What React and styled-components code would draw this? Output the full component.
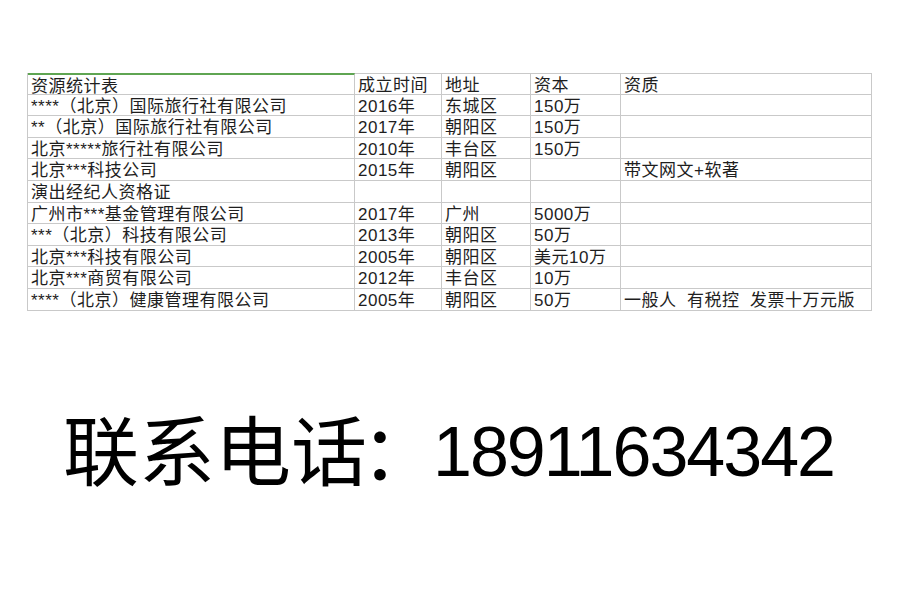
import React from 'react';
import styled, { createGlobalStyle } from 'styled-components';

const rows = [
  ['资源统计表', '成立时间', '地址', '资本', '资质'],
  ['****（北京）国际旅行社有限公司', '2016年', '东城区', '150万', ''],
  ['**（北京）国际旅行社有限公司', '2017年', '朝阳区', '150万', ''],
  ['北京*****旅行社有限公司', '2010年', '丰台区', '150万', ''],
  ['北京***科技公司', '2015年', '朝阳区', '', '带文网文+软著'],
  ['演出经纪人资格证', '', '', '', ''],
  ['广州市***基金管理有限公司', '2017年', '广州', '5000万', ''],
  ['***（北京）科技有限公司', '2013年', '朝阳区', '50万', ''],
  ['北京***科技有限公司', '2005年', '朝阳区', '美元10万', ''],
  ['北京***商贸有限公司', '2012年', '丰台区', '10万', ''],
  ['****（北京）健康管理有限公司', '2005年', '朝阳区', '50万', '一般人  有税控  发票十万元版'],
];

export default function App() {
  return (
    <>
      <GlobalStyle />
      <Page>
        <Sheet>
          {rows.map((row, r) =>
            row.map((text, c) => (
              <Cell key={`${r}-${c}`} $top={r === 0} $active={r === 0 && c === 0}>
                {text}
              </Cell>
            ))
          )}
        </Sheet>
        <Contact>
          联系电话<Colon>：</Colon>
          <Phone>18911634342</Phone>
        </Contact>
      </Page>
    </>
  );
}

const GlobalStyle = createGlobalStyle`
  body {
    margin: 0;
    background: #ffffff;
  }
`;

const Page = styled.div`
  width: 900px;
  height: 600px;
  padding: 73px 0 0 27px;
  box-sizing: border-box;
  background: #ffffff;
  font-family: 'Liberation Sans', 'Noto Sans CJK SC', sans-serif;
  color: #1e1e1e;
`;

const Sheet = styled.div`
  display: grid;
  grid-template-columns: 327px 87px 89px 90px 251px;
  grid-auto-rows: 21.6px;
  width: max-content;
  border-left: 1px solid #c9c9c9;
`;

const Cell = styled.div`
  box-sizing: border-box;
  padding: 1px 0 0 3px;
  border-right: 1px solid #c9c9c9;
  border-bottom: 1px solid #c9c9c9;
  border-top: ${(p) =>
    p.$active ? '2px solid #5fa552' : p.$top ? '1px solid #c9c9c9' : 'none'};
  font-size: 17px;
  line-height: 21px;
  letter-spacing: 0.5px;
  white-space: pre;
  overflow: hidden;
`;

const Contact = styled.div`
  margin: 98px 0 0 36px;
  font-family: 'Noto Sans CJK SC', sans-serif;
  font-size: 76px;
  line-height: 76px;
  color: #000000;
  white-space: nowrap;
`;

const Colon = styled.span`
  margin: 0 -4px 0 -6px;
`;

const Phone = styled.span`
  font-family: 'Liberation Sans', sans-serif;
  font-size: 70px;
  letter-spacing: -2px;
  vertical-align: 4px;
`;
